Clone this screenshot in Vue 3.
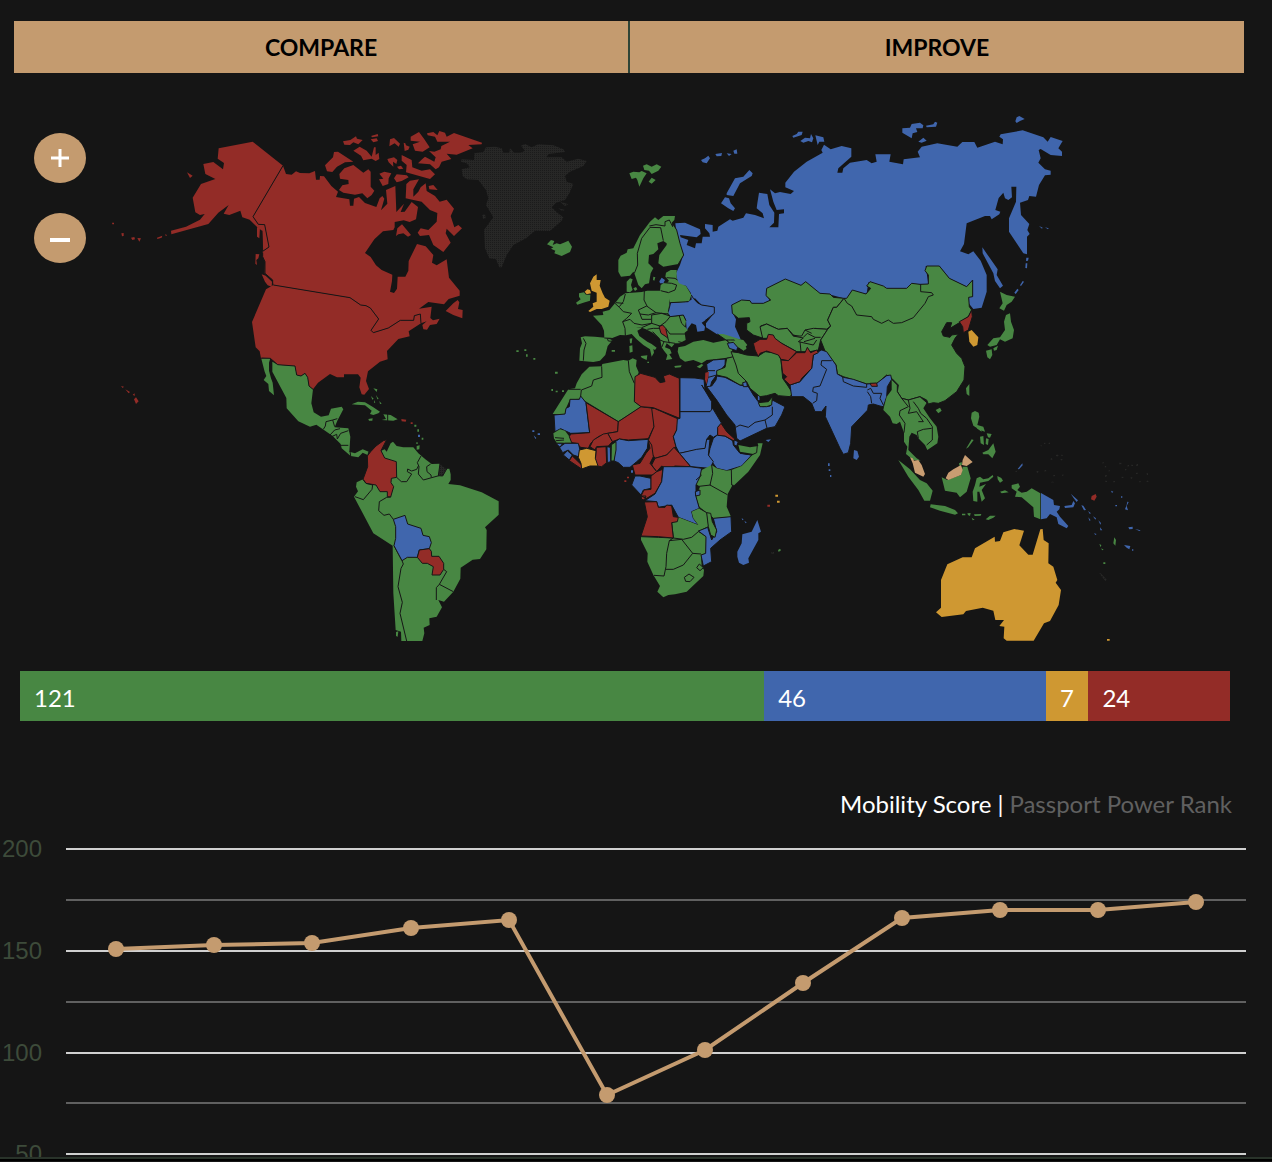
<script setup>
import { ref, computed } from 'vue'

const access = [
  { kind: 'free', count: 121, width: 61.5 },
  { kind: 'arrival', count: 46, width: 23.3 },
  { kind: 'eta', count: 7, width: 3.5 },
  { kind: 'required', count: 24, width: 11.7 }
]

// Each region has its own origin on the 3816 x 1593 map canvas.
// A shape is [class names, path data]; "lined" adds a country border.
const regions = [
  {
    name: 'Eurasia north',
    x: 1980,
    y: 0,
    shapes: [
      ['arrival', 'M46 340 75 338 120 358 122 372 110 382 60 375 62 382 85 390 80 405 105 415 108 400 125 400 128 380 150 380 148 370 135 355 135 342 158 345 158 365 172 362 175 350 210 328 218 332 250 323 258 310 285 315 312 325 308 310 290 295 292 280 297 248 322 252 328 285 343 308 342 338 328 352 355 352 357 312 372 310 372 298 350 300 340 275 330 238 345 250 360 246 392 252 402 243 376 232 376 218 402 185 440 155 488 128 484 120 492 104 512 118 545 108 574 115 574 140 535 175 532 188 547 188 550 175 570 158 620 150 635 160 650 155 646 133 692 133 688 155 729 163 731 148 780 142 773 125 785 110 832 100 892 110 907 96 943 96 952 113 1005 95 1028 103 1029 88 1018 80 1022 73 1088 61 1150 82 1163 95 1172 81 1208 93 1195 115 1206 125 1206 138 1172 135 1142 117 1136 120 1142 145 1135 158 1155 178 1172 182 1172 194 1155 196 1137 225 1128 260 1108 258 1104 270 1080 278 1083 315 1108 342 1102 360 1109 372 1101 380 1101 433 1090 430 1047 365 1047 325 1068 275 1069 230 1054 230 1056 262 1045 270 1035 265 1030 248 1016 264 1006 300 1021 305 1018 313 995 328 990 318 975 318 920 340 912 402 900 424 925 433 940 424 962 452 980 495 980 545 965 593 940 597 926 580 926 562 938 560 938 512 920 530 868 505 838 468 797 468 805 522 755 523 735 540 680 540 625 517 620 552 575 542 560 567 512 554 475 554 437 517 422 527 375 509 322 535 322 560 330 572 305 582 270 582 240 572 217 587 218 610 228 628 225 650 235 672 245 695 215 688 170 672 138 652 138 640 162 610 162 592 125 585 105 565 95 568 93 550 78 527 55 525 48 490 60 465 70 435 50 380Z'],
      ['arrival', 'M200 250 225 205 250 200 268 180 278 190 275 198 240 220 220 258 200 255ZM183 280 195 262 207 265 212 280 225 295 220 303 205 295ZM123 150 135 145 145 137 150 145 140 160 128 157ZM166 132 186 129 184 138 170 139ZM200 130 215 132 207 138ZM220 122 230 118 232 131 223 131Z'],
      ['arrival', 'M397 78 410 72 415 65 428 65 425 75 400 83ZM421 93 435 83 450 85 453 72 460 85 456 97 445 93 430 98ZM466 76 490 82 493 95 478 95 473 105ZM727 55 750 53 755 42 780 38 790 46 788 55 768 55 772 66 758 70 755 85 727 68ZM798 47 820 43 825 35 832 38 828 50 800 52ZM775 95 790 83 800 92 785 98ZM1066 34 1070 22 1078 18 1094 27 1080 33 1070 39Z'],
      ['arrival', 'M967 412 990 445 1013 478 1010 495 1029 527 1020 535 1005 513 1000 490 968 430ZM1099 443 1106 443 1104 452 1098 453ZM1097 460 1102 460 1101 475 1096 474ZM1088 513 1092 515 1083 528 1080 526ZM1063 548 1072 536 1076 540 1067 552ZM1137 348 1148 353 1146 356ZM1155 352 1166 355 1164 358Z']
    ]
  },
  {
    name: 'North America',
    x: 300,
    y: 0,
    shapes: [
      ['required', 'M458 95 549 167 459 320 475 343 494 344 507 411 488 424 486 362 472 352 449 329 427 322 421 302 388 315 371 311 386 285 355 308 325 342 214 373 213 362 258 350 300 329 314 312 300 315 286 307 278 263 303 222 346 207 316 192 310 162 340 156 369 178 372 159 353 146 356 115Z'],
      ['required', 'M549 167 558 192 575 194 588 184 600 189 628 190 645 183 648 209 659 209 660 198 672 199 694 228 714 245 708 261 748 268 750 287 760 287 762 266 777 261 795 279 829 291 839 265 847 258 853 266 843 301 862 281 858 240 886 228 889 306 912 281 902 306 914 305 935 276 954 291 948 328 929 336 911 331 884 336 884 352 880 360 849 364 823 388 795 429 812 441 828 466 845 480 877 494 876 513 870 545 882 549 891 536 893 500 916 500 925 482 926 453 951 402 977 409 1000 435 996 458 1010 466 1040 448 1047 503 1079 542 1079 557 1046 567 1032 583 985 576 957 596 995 590 991 624 999 631 1019 626 1010 642 990 645 981 659 970 658 967 645 980 634 963 640 961 612 943 617 941 631 901 631 865 654 820 668 813 661 836 627 811 594 798 587 782 585 750 563 520 525 518 510 494 490 495 455 488 440 488 424 507 411 494 344 475 343 459 320Z'],
      ['required', 'M702 126 714 125 760 155 735 157 711 170 697 186 681 184 675 166 699 142ZM718 192 733 175 760 165 790 188 805 178 812 185 812 230 823 242 815 255 802 265 787 250 765 254 730 248 717 240 727 226 746 222 745 210 720 206ZM760 122 779 110 800 122 815 140 822 112 827 112 827 135 836 128 838 147 827 153 815 146 790 151 783 137ZM729 94 751 90 768 79 771 86 788 90 775 103 760 97 750 105 733 104ZM813 78 833 72 835 79 817 82ZM812 88 830 85 834 93 820 97ZM870 88 882 84 900 101 896 110 884 100 868 109ZM911 98 916 100 918 106 929 110 925 119 914 123ZM862 147 882 142 892 150 889 162 879 155 880 170 866 157ZM891 170 903 167 910 176 897 178Z'],
      ['required', 'M905 135 935 150 937 172 965 182 990 178 1005 193 990 207 950 196 918 187 920 165 905 152ZM932 80 957 66 973 88 989 112 968 125 945 122 938 103 960 95 932 92ZM981 70 1000 66 1012 76 1018 63 1035 68 1040 80 1062 69 1146 98 1145 103 1105 105 1118 115 1070 134 1040 131 1054 147 1025 155 1017 172 1007 178 990 163 954 160 967 147 975 140 1003 155 1007 142 987 123 1003 125 1022 118 1024 108 1050 95 1012 95 1005 80 983 76ZM838 191 853 185 874 190 866 205 865 222 848 228 837 208 850 206ZM882 205 890 193 920 196 926 202 905 213 890 217Z'],
      ['required', 'M919 222 930 212 957 208 940 238 940 260 955 245 962 232 977 220 980 243 1005 258 1019 275 1040 269 1062 296 1052 318 1063 352 1075 345 1086 355 1062 378 1040 356 1037 370 1052 398 1030 426 1000 405 987 375 960 378 953 368 962 355 985 360 1010 335 1012 309 990 300 965 275 930 268 917 265ZM986 228 1000 225 1013 240 988 238ZM888 378 892 355 906 343 933 375 924 380 910 370 895 373ZM1037 603 1060 580 1073 570 1078 577 1074 597 1088 600 1087 625 1060 615Z'],
      ['required', 'M485 493 497 497 516 515 515 530 503 526 495 515ZM467 432 478 433 475 445 469 450 471 465 466 461ZM471 352 480 352 478 385 471 380ZM261 187 278 197 270 204ZM36 338 42 338 42 343 37 343ZM64 370 71 369 71 378 66 379ZM93 383 103 381 105 388 97 390ZM112 384 123 385 118 395ZM171 383 187 377 185 383 172 387ZM195 373 201 375 198 379Z'],
      ['required', 'M63 828 72 830 68 834ZM76 838 90 846 86 850ZM98 854 104 850 104 858ZM102 868 108 862 116 874 108 882Z'],
      ['border', 'M549 167 459 320 475 343 494 344 507 411 488 424 486 362M488 428 488 440 495 455 495 490 518 510 518 540']
    ]
  },
  {
    name: 'Central and South America',
    x: 720,
    y: 630,
    shapes: [
      ['required', 'M100-105 330-67 362-45 378-43 391-36 416-3 393 31 400 38 445 24 481 1 521 1 523-13 541-18 543 10 506 34 509 49 475 57 441 93 443 118 420 125 384 154 378 183 387 207 373 224 365 223 358 202 362 173 354 163 312 163 312 172 291 172 270 162 234 188 219 208 207 198 203 172 195 160 183 168 170 165 165 138 113 134 91 115 63 115 59 94 47 82 36 6 78-92Z'],
      ['border', 'M100-105 330-67 362-45 378-43 391-36 416-3 393 31 400 38 445 24 481 1 521 1 523-13 541-18 543 10'],
      ['free', 'M64 116 91 115 87 128 87 152 93 175 98 188 102 226 87 213 85 192 71 180 79 168 74 155ZM97 125 113 134 165 138 170 165 183 168 195 160 203 172 207 198 219 208 214 250 221 277 243 290 266 286 273 266 305 260 310 268 292 302 284 322 325 325 331 350 328 395 345 400 368 388 388 396 383 405 368 398 355 412 332 408 305 385 302 372 278 348 252 330 229 314 210 320 175 304 140 265 139 234 97 155Z'],
      ['border', 'M64 114 91 115 113 134 165 138 170 165 183 168 195 160 203 172 207 198 219 208M258 305 278 300 292 296M258 305 256 318 250 328M278 300 284 320M270 345 284 330 300 326M275 350 290 343 292 357 302 340 325 332M302 376 325 376M330 393 332 408M387 394 383 408'],
      ['free', 'M335 253 354 245 375 247 400 262 420 275 415 280 400 285 390 282 395 272 375 256 350 254ZM385 297 398 295 397 302 387 302ZM430 283 452 285 473 298 460 302 425 300 438 297ZM400 205 412 208 410 216ZM393 228 401 236 397 239ZM408 225 416 237 412 238ZM402 240 406 248 402 248ZM418 243 425 251 420 252ZM523 314h6v6h-6ZM532 328h5v7h-5ZM545 353h5v6h-5ZM529 367h4v5h-4ZM530 378 539 376 538 388 530 389Z'],
      ['border', 'M443 280V303'],
      ['required', 'M484 297 499 299 497 305 485 304ZM512 307h6v5h-6Z'],
      ['arrival', 'M534 344h6v7h-6ZM877 331h6v5h-6ZM881 346 889 354 886 357ZM893 340h7v5h-7Z'],
      ['free', 'M829 91h7v5h-7ZM853 88h6v5h-6ZM858 103h5v7h-5ZM880 114h6v5h-6Z'],
      ['free', 'M424 392 434 388 440 395 452 370 459 365 470 378 490 382 520 382 535 400 556 418 575 432 598 431 615 447 628 446 632 463 632 480 625 492 660 496 725 517 776 544 776 584 735 622 740 630 739 688 720 717 698 719 662 743 661 776 640 815 612 845 595 840 606 862 590 890 568 895 569 915 551 923 553 940 547 963 484 963 483 935 467 930 460 820 458 677 400 640 342 530 354 514 348 500 350 487 369 478 400 480 440 500Z'],
      ['free', 'M468 936 475 934 473 950 468 948Z'],
      ['required lined', 'M440 359 423 392 434 414 469 425 470 472 454 475 453 488 461 500 452 531 442 530 442 515 420 515 408 495 378 490 369 478 383 440 382 408 392 395 408 378 430 362Z'],
      ['border', 'M369 478 378 490 398 495 396 508 370 539 345 530M470 472 484 485 500 485 515 462 502 455 503 447 515 453 530 448 535 438M543 408 532 428 537 440 535 462 550 480 575 473 597 467M572 432 560 440 561 455 573 465 574 473M452 531 440 532 418 545 416 572 432 586 448 582 460 598M640 815 598 793 589 803 589 840M598 793 620 755 611 748M462 677 486 722 490 732 483 745 474 800 487 847 480 880 500 963'],
      ['none lined', 'M600 431 620 447 608 468 595 467Z'],
      ['arrival lined', 'M460 598 495 586 503 612 543 625 549 646 568 650 574 668 568 686 538 690 532 712 502 712 486 722 462 677 467 655 467 620Z'],
      ['required lined', 'M538 690 568 686 574 694 575 709 597 709 611 730 611 748 600 765 576 765 580 740 562 730 547 730 532 712Z']
    ]
  },
  {
    name: 'North Atlantic',
    x: 1350,
    y: 60,
    shapes: [
      ['none', 'M33 95 35 88 72 90 73 70 100 66 108 52 135 50 155 55 160 68 178 68 180 54 192 68 212 68 225 62 213 47 225 42 245 52 265 43 310 46 340 58 345 66 295 72 290 82 335 82 350 95 385 86 410 93 400 108 360 125 345 138 350 155 370 162 358 190 345 210 318 218 305 232 322 248 340 262 335 272 300 303 255 302 228 325 190 345 170 375 155 412 148 412 138 388 118 385 105 355 102 300 130 262 108 225 115 205 108 180 85 150 50 148 38 138 35 118 60 112 50 100ZM97 255 105 253 107 265 99 266ZM325 235 345 240 337 243ZM330 215 355 223 345 228Z'],
      ['free', 'M291 343 303 330 313 333 308 345 320 340 330 343 345 337 355 332 366 350 360 366 335 378 313 370 316 362 303 356 310 352ZM538 130 550 125 568 127 575 123 590 130 580 145 568 170 562 150 558 143 545 147ZM579 107 590 103 605 110 620 103 634 110 625 122 605 132 597 122 583 120ZM596 155 605 143 617 150 605 161Z'],
      ['eta', 'M430 440 440 433 440 450 452 450 449 467 458 490 465 503 479 512 475 530 455 537 440 537 420 546 415 543 430 530 428 520 440 515 440 488 425 482 420 460ZM404 485 412 478 420 480 423 490 410 493Z'],
      ['free', 'M387 490 402 487 408 494 421 494 420 512 400 518 382 524 378 518 392 508 387 500Z'],
      ['free', 'M513 440 505 425 505 390 512 377 530 368 533 358 550 355 570 315 600 275 615 262 625 270 640 258 675 258 673 270 665 278 680 300 690 340 701 375 685 402 640 410 625 400 628 375 650 345 650 340 640 333 622 340 625 358 610 372 597 375 595 400 610 415 602 430 597 460 585 463 575 475 565 465 553 430 550 425 540 437ZM530 455 540 445 548 448 543 465 548 480 540 487 530 485ZM550 475 558 471 562 478 555 483ZM610 440 616 442 613 452 609 450Z'],
      ['border', 'M553 430 563 405 562 370 575 325 600 292 632 293 640 332M598 288 618 284 645 288 645 275 658 270 668 290 668 280 680 300 690 340 701 375 685 402']
    ]
  },
  {
    name: 'Europe',
    x: 1680,
    y: 450,
    shapes: [
      ['free', 'M99 167 130 165 128 155 148 150 165 130 180 110 196 100 245 96 262 92 300 92 322 95 330 110 325 155 330 170 358 168 370 165 378 182 375 200 384 210 374 218 377 240 358 250 345 250 335 262 320 250 315 262 330 268 335 280 328 283 337 297 318 300 322 285 312 272 305 262 300 236 278 218 258 208 245 203 225 202 196 226 180 225 155 235 133 234 132 212 125 195Z'],
      ['free', 'M62 232 75 229 105 230 135 233 158 240 143 258 136 285 120 302 100 306 58 302 60 265 66 250ZM195 205 225 200 245 205 232 212 238 228 262 245 275 252 290 263 285 270 280 267 282 278 275 290 270 268 250 255 230 238 215 222 198 226ZM242 288 262 286 260 300 245 293ZM208 258 217 256 218 275 209 278ZM209 236 217 235 215 250 210 250ZM155 270h10v5h-10ZM343 318 365 316 362 322 345 323ZM410 320 425 312 430 315 420 325ZM262 305h5v4h-5Z'],
      ['free', 'M300 92 302 75 312 68 322 68 327 62 316 50 318 38 332 30 350 30 350 55 357 70 378 78 394 105 388 122 370 128 330 126 322 95Z'],
      ['arrival', 'M298 64 305 53 315 60 310 70 300 70ZM330 128 355 128 385 125 400 115 412 128 425 135 463 141 463 160 445 175 425 188 435 200 433 212 412 215 408 195 395 190 380 210 378 180 370 165 330 170 325 155Z'],
      ['free', 'M355 262 375 258 400 245 430 240 460 248 500 240 515 265 520 290 490 295 440 300 425 310 400 300 375 305 360 295 353 275ZM472 222 490 222 530 235 545 240 560 265 555 270 530 260 505 245Z'],
      ['border', 'M320 53 345 55 352 60M312 68 335 70 350 75 345 90 325 98 302 92M394 105 400 115 412 128 425 135 463 141 463 160 435 182M325 155 332 128 385 125M378 182 370 165 330 170 322 160M358 168 365 190 375 200'],
      ['border', 'M165 130 178 142 190 155M196 102 190 125 178 140M168 128 190 130M190 155 215 160 200 175 188 185 195 205 196 226M235 150 260 138 288 158 265 165 240 162 235 150M253 93 252 120 262 140M288 158 325 162M240 162 246 178 275 178 275 165M188 185 210 178 222 190 246 195 275 190 275 178M275 165 305 160 330 168M275 190 300 198 318 185 330 170M245 203 275 190M262 208 280 205 297 205M278 215 297 235M133 234 155 235 157 244 145 243 142 236M317 205 330 222 376 222M305 262 312 245 345 250M324 235 328 250M300 240 312 245M70 235 78 250 72 270 70 302M355 245 368 248'],
      ['required lined', 'M297 200 308 195 317 205 324 235 318 230 303 220Z'],
      ['border', 'M472 222 505 245 500 240 512 240 545 240'],
      ['arrival lined', 'M502 250 520 247 533 262 530 272 508 265Z']
    ]
  },
  {
    name: 'Africa and Arabia',
    x: 1620,
    y: 690,
    shapes: [
      ['free', 'M125 103 148 80 185 79 187 72 250 60 265 62 278 55 290 60 288 78 296 97 285 130 283 185 303 200 235 244 124 176 90 178 78 205 75 222 38 222 55 195 85 148 105 145 110 130Z'],
      ['border', 'M185 79 186 112 160 120 155 138 124 150 122 168M265 62 268 95 283 130M122 148 85 148'],
      ['arrival lined', 'M42 225 75 222 78 205 88 200 90 178 118 178 122 168 138 188 149 278 92 280 62 266 45 275Z'],
      ['free', 'M40 280 60 268 75 272 92 295 95 308 50 308 42 295Z'],
      ['border', 'M45 293 72 295M48 302 72 300'],
      ['required lined', 'M138 188 235 245 233 275 203 280 175 290 152 310 145 325 122 322 110 310 95 308 88 290 92 282 149 278Z'],
      ['required lined', 'M235 245 303 200 340 205 342 260 325 296 265 300 238 297 217 305 203 280 233 275Z'],
      ['required lined', 'M150 320 160 300 190 282 203 280 217 305 205 318 170 320 165 330Z'],
      ['required lined', 'M335 205 343 205 415 237 410 270 400 290 408 320 400 325 380 345 345 355 335 340 325 300 342 260Z'],
      ['required lined', 'M285 110 302 100 345 112 360 128 375 125 370 108 388 102 418 115 419 235 340 203 303 200 283 185Z'],
      ['arrival lined', 'M420 113 465 114 492 118 495 150 485 135 515 185 515 215 420 215Z'],
      ['arrival lined', 'M420 215 510 215 518 205 545 250 535 260 532 285 520 292 510 285 500 298 497 325 470 330 418 340 408 320 400 290 410 270 412 237 420 235Z'],
      ['arrival lined', 'M532 285 555 288 578 302 580 315 600 340 635 345 605 378 560 392 530 385 505 350 510 325 520 295Z'],
      ['required lined', 'M533 262 543 250 560 275 585 298 580 302 555 288 533 286Z'],
      ['free', 'M595 315 630 322 655 318 653 310 668 310 660 345 625 395 580 438 574 400 605 378 640 342 600 335Z'],
      ['border', 'M652 315 650 338 635 345 605 340'],
      ['arrival lined', 'M582 300 595 305 590 318 582 315Z'],
      ['arrival lined', 'M418 340 470 328 495 325 500 298 510 298 505 345 520 365 510 385 452 380Z'],
      ['required lined', 'M345 355 380 345 402 322 418 340 452 380 405 378 385 388 365 378 350 395 335 375Z'],
      ['required lined', 'M325 300 335 315 340 350 330 370 350 395 340 405 285 405 277 375 300 370 318 340 330 325Z'],
      ['arrival lined', 'M225 305 238 297 265 302 325 298 322 325 305 352 290 365 270 382 250 382 235 368 222 363Z'],
      ['free lined', 'M214 314 228 305 228 330 222 363 213 363Z'],
      ['arrival lined', 'M201 320 211 322 212 365 202 368Z'],
      ['required lined', 'M169 322 198 320 200 368 185 380 170 378 166 360Z'],
      ['arrival lined', 'M58 322 75 310 115 310 120 330 115 350 100 345 85 330 68 338ZM70 345 82 332 97 345 88 360ZM48 310 68 310 60 322Z'],
      ['required lined', 'M88 362 97 348 125 375 125 387Z'],
      ['eta lined', 'M118 330 140 325 168 332 166 355 174 378 150 378 125 387 123 370 115 352Z'],
      ['arrival lined', 'M285 408 300 408 333 415 333 445 310 450 303 465 275 435Z'],
      ['required lined', 'M333 408 350 395 368 388 365 425 345 460 320 475 303 468 312 450 333 448ZM303 468 318 468 313 480 305 478Z'],
      ['free', 'M485 390 515 375 530 385 560 392 574 390 605 378 576 438 563 462 560 500 573 530 520 535 478 500 468 470 480 440 465 430Z'],
      ['arrival lined', 'M370 380 400 380 450 380 485 385 480 410 468 435 468 470 478 505 455 515 460 535 475 555 415 532 395 495 355 502 350 485 315 482 345 462 365 425Z'],
      ['free', 'M395 548 415 532 475 555 460 535 455 515 478 505 500 518 505 560 475 575 498 590 497 640 483 645 485 678 492 690 490 708 440 755 405 763 385 765 370 772 352 755 360 738 340 705 322 665 323 640 303 600 303 588 400 594Z'],
      ['border', 'M515 375 518 400 510 435 562 464M468 440 512 435M468 420 485 405M574 390 575 435 582 438M478 505 500 518 520 535M395 548 400 594 430 598 455 592 475 575 505 560M388 602 380 640 378 680 372 708 342 706M303 590 355 592 400 594 388 602 425 598 458 640 430 675 400 688 378 688M458 640 483 642'],
      ['required lined', 'M313 486 350 485 355 502 375 502 380 495 395 497 400 530 415 532 412 545 395 548 400 594 355 590 303 588 322 530Z'],
      ['arrival lined', 'M466 455 480 450 480 465 467 468Z'],
      ['arrival lined', 'M520 535 573 530 575 575 540 600 512 625 515 665 490 678 483 645 497 640 498 590 475 573 503 562 515 600 530 575Z'],
      ['free lined', 'M500 518 512 520 517 545 530 570 525 592 512 585 505 560Z'],
      ['free lined', 'M433 712 447 702 462 712 450 725 437 724ZM470 683 478 672 490 683 480 692Z'],
      ['arrival', 'M652 540 663 575 655 580 655 600 625 655 627 668 610 675 597 668 592 650 592 635 605 610 607 583 635 575ZM605 535 611 538 607 541ZM613 543 620 547 617 550ZM273 391h6v7h-6ZM677 300 693 298 685 306Z'],
      ['eta', 'M706 464h8v6h-8ZM711 482h8v6h-8Z'],
      ['required', 'M682 494h8v6h-8ZM261 410h6v5h-6ZM253 421h6v5h-6Z'],
      ['free', 'M714 630 720 626 723 631 716 636ZM45 95h8v6h-8ZM34 147h5v6h-5ZM47 152h6v5h-6ZM66 151h6v5h-6Z'],
      ['none', 'M694 636h8v5h-8Z'],
      ['arrival lined', 'M500 72 520 60 556 57 555 75 530 105 515 125 510 145 498 140 504 112Z'],
      ['required', 'M496 98 507 95 504 115 499 133 495 118Z'],
      ['arrival lined', 'M500 140 515 138 528 120 530 108 555 112 600 135 625 140 640 165 655 185 668 200 690 198 697 180 735 200 725 225 705 260 680 265 600 303 590 295 585 255 560 225 530 180Z'],
      ['border', 'M587 262 600 255 625 262 645 247 675 240 697 225 697 200M675 240 682 268M503 92 525 92M505 112 530 105'],
      ['free lined', 'M530 105 530 92 555 82 560 55 580 50 600 70 595 90 615 115 620 135 600 135 560 112Z'],
      ['free lined', 'M655 188 685 185 697 170 695 195 680 200 660 200Z'],
      ['arrival lined', 'M608 128 620 125 622 140 610 140ZM652 166 660 166 660 182 652 182Z']
    ]
  },
  {
    name: 'Asia',
    x: 2100,
    y: 420,
    shapes: [
      ['free lined', 'M95 165 125 150 150 152 155 160 190 160 212 150 198 137 200 115 256 87 303 106 317 95 360 130 390 132 400 142 432 145 410 172 400 172 383 210 392 228 380 238 345 235 310 262 300 260 280 255 262 235 235 238 200 222 182 228 190 265 160 255 140 240 140 220 150 215 148 203 115 205 97 190Z'],
      ['free lined', 'M180 230 200 222 235 238 262 235 280 258 305 258 315 240 340 235 383 238 362 270 355 300 330 305 290 305 245 280 215 265 188 265Z'],
      ['border', 'M280 258 310 264 295 275 340 285 350 270M300 275 303 305M310 262 322 250 345 262 362 262M312 275 345 265M315 240 335 250'],
      ['free lined', 'M93 305 115 308 140 315 175 318 195 305 235 310 243 330 248 385 262 405 278 430 270 440 235 437 225 430 200 437 180 440 150 415 140 395 115 370 108 345Z'],
      ['free', 'M100 265 130 270 142 285 135 292 132 303 120 295 115 285Z'],
      ['required lined', 'M160 280 180 268 200 268 205 253 220 255 225 265 245 280 290 305 265 332 243 328 235 315 200 303 180 310 175 320 165 300Z'],
      ['free lined', 'M432 145 440 145 457 120 498 132 512 115 500 108 510 95 550 108 560 115 620 115 635 100 660 103 685 102 685 75 675 62 680 48 718 48 748 85 800 110 818 90 818 140 806 142 808 170 815 180 805 200 790 210 775 220 750 235 755 218 740 218 725 245 730 258 750 262 755 255 775 252 765 265 755 285 770 310 785 325 795 350 792 390 770 425 735 452 715 460 700 458 685 462 680 450 660 440 625 450 605 445 592 425 595 405 575 385 560 375 530 402 500 402 430 380 412 372 408 345 375 303 362 270 383 238 392 228 383 210 400 172 410 172Z'],
      ['border', 'M432 145 442 160 455 168 470 195 515 200 520 208 545 220 565 210 580 220 605 218 640 203 675 160 685 140 700 135 695 128 662 125 662 103'],
      ['arrival lined', 'M270 405 300 395 335 355 340 315 355 305 365 300 380 305 408 345 412 372 430 382 460 388 500 402 530 400 560 377 572 375 575 388 562 410 560 440 550 470 540 468 520 462 505 465 503 480 455 530 452 580 445 608 430 613 420 595 376 500 378 468 365 485 345 485 335 460 310 440 275 440Z'],
      ['required lined', 'M243 330 265 332 290 308 315 308 322 292 332 308 350 300 355 308 340 315 335 355 305 385 300 395 270 405 252 388 260 380 248 370Z'],
      ['border', 'M395 332 365 332 363 345 380 358 360 408 340 412 338 425 352 430 350 452 338 460M428 380 430 395 460 408 500 412 500 402M502 420 512 415 520 430 545 430 540 445 550 465M515 460 512 440 502 425'],
      ['required lined', 'M510 400 530 399 532 409 515 409Z'],
      ['arrival', 'M462 600 472 603 477 620 470 630 460 625ZM384 640h5v8h-5ZM386 658h5v5h-5ZM390 675h4v6h-4Z'],
      ['free', 'M707 480 720 473 725 482 715 490ZM798 415 808 402 808 438 800 432ZM815 488 825 483 836 488 838 500 832 525 850 530 855 545 840 540 820 527 813 505ZM900 125 920 135 945 140 935 155 920 165 912 182 898 175 908 160ZM918 195 930 190 933 215 942 240 938 265 915 275 900 268 890 285 870 290 862 285 880 265 900 262 915 240 912 215ZM858 302 875 298 877 315 870 328 862 322ZM880 295 894 287 890 300 882 302Z'],
      ['required lined', 'M815 180 817 200 805 240 790 248 788 230 778 215 805 200Z'],
      ['eta', 'M805 245 815 240 835 262 832 285 820 290 808 275Z'],
      ['free', 'M575 388 592 405 592 425 605 445 625 450 660 440 680 458 670 475 690 505 710 530 715 560 712 580 682 600 675 585 655 565 650 555 635 548 628 560 625 600 650 625 662 632 640 630 618 612 622 590 612 575 612 548 600 515 590 522 578 520 570 500 550 480 552 470 560 440 575 420Z'],
      ['border', 'M605 445 625 470 600 482 598 495 615 520 612 548M625 450 630 475 625 490 650 485 670 515 655 515M640 455 655 475 662 490 680 505 697 530 697 570 680 585M655 565 652 545 670 538 695 535M575 388 592 405 592 425 605 445 625 450 660 440 685 462']
    ]
  },
  {
    name: 'Oceania',
    x: 2580,
    y: 930,
    shapes: [
      ['home', 'M150 112 158 115 162 122 175 120 185 135 195 162 190 170 165 158 158 130Z'],
      ['free', 'M115 120 150 148 180 180 200 190 218 212 210 242 193 242 175 210 145 170ZM212 253 255 258 285 270 294 280 285 284 240 272 210 262ZM306 281h10v5h-10ZM322 280 332 279 330 288 324 285ZM342 283 364 282 362 287 344 288ZM335 293 344 299 338 301ZM377 298 390 287 407 287 400 293 385 300ZM245 172 262 180 303 165 308 140 322 140 332 175 320 215 300 232 290 218 255 212ZM297 130 305 126 306 134 298 137Z'],
      ['home', 'M257 175 265 158 280 148 303 135 308 150 303 165 265 180ZM315 105 338 126 320 138 306 135 308 120Z'],
      ['free', 'M350 175 360 170 370 178 385 175 398 165 400 170 385 183 360 188 358 200 378 192 365 210 375 235 365 245 358 215 352 215 352 245 340 243 338 215 345 195ZM412 168 424 174 429 182 420 188 413 178ZM420 215 435 211 446 217 425 220ZM318 86 335 58 341 60 325 82ZM360 50 370 48 372 75 362 70ZM380 40 395 42 390 53 384 52ZM378 55 386 57 384 75 377 72ZM350 25 362 20 365 35ZM367 98 385 90 400 70 407 95 397 115 385 103 370 103Z'],
      ['free', 'M455 195 475 190 480 200 472 210 485 218 500 215 515 205 541 220 541 298 522 290 520 262 485 232 465 230 470 215 455 205ZM763 352 768 360 766 377 760 370ZM718 372 724 375 722 382ZM724 385 731 389 726 391ZM730 427h6v5h-6Z'],
      ['arrival', 'M543 219 580 240 582 255 600 258 598 268 590 275 600 290 625 318 620 325 595 312 590 292 570 282 560 295 543 298ZM613 258 635 255 640 243 645 250 640 262 615 264ZM632 221 654 241 650 246 643 237ZM664 256 670 257 678 270 672 271ZM684 273 692 279 690 283ZM685 292 692 301 688 302ZM699 289 708 295 706 299ZM715 301 723 309 721 314ZM720 322 727 331 721 331ZM702 340 710 342 706 345Z'],
      ['arrival', 'M473 147 487 130 488 136 477 148ZM753 212 760 215 756 219ZM766 255h5v4h-5ZM783 229h4v4h-4ZM795 268 800 255 802 245 806 246 800 258 804 271ZM805 322 818 320 818 327 808 328ZM825 327 842 331 838 333ZM792 375 811 378 808 388 800 383ZM816 388h4v4h-4Z'],
      ['required', 'M695 228 707 222 710 230 703 242 693 238Z'],
      ['none', 'M718 460 722 460 740 479 736 483ZM465 156 472 150 470 156ZM552 68h4v4h-4ZM566 68h4v4h-4ZM542 76h3v3h-3ZM588 104h7v5h-7ZM604 104h4v4h-4ZM572 115h5v4h-5ZM602 117h5v4h-5ZM530 153h5v5h-5ZM552 150h7v4h-7ZM580 165h5v4h-5ZM606 163h4v4h-4ZM575 185h5v4h-5ZM726 126h5v4h-5ZM734 138h5v4h-5ZM745 150h4v4h-4ZM735 166h6v4h-6ZM736 182h5v4h-5ZM760 183h5v4h-5ZM778 128h6v5h-6ZM795 147h4v4h-4ZM803 135h4v5h-4ZM814 134h5v4h-5ZM828 132h6v5h-6ZM785 170h5v4h-5ZM812 172h5v4h-5ZM828 158h5v4h-5ZM838 183h4v4h-4ZM860 160h4v5h-4ZM860 182h5v4h-5Z'],
      ['eta', 'M430 337 463 327 492 332 478 376 505 404 518 404 541 328 548 327 551 360 566 370 565 430 580 440 592 480 587 488 603 510 596 555 570 603 552 610 521 662 440 662 431 655 433 620 418 618 432 600 406 600 400 572 368 563 318 573 310 583 245 591 228 577 243 563 243 480 262 433 308 412 335 412 345 385 404 350 405 365 420 363ZM741 657h8v5h-8Z']
    ]
  }
]

const zoomLevel = ref(1)
const zoom = (step) => {
  zoomLevel.value = Math.min(4, Math.max(1, zoomLevel.value + step))
}

const viewBox = computed(() => {
  const w = 3816 / zoomLevel.value
  const h = 1593 / zoomLevel.value
  return `${(3816 - w) / 2} ${(1593 - h) / 2} ${w} ${h}`
})

// chart
const metric = ref('score')
const scores = [151, 153, 154, 161, 165, 79, 101, 134, 166, 170, 170, 174]
const ticks = [200, 175, 150, 125, 100, 75, 50]

const valueToY = (value) => Math.round(12 + (200 - value) * 2.035)
const points = scores.map((score, i) => ({
  x: Math.round(116 + i * 98.2),
  y: valueToY(score)
}))
const linePoints = points.map((p) => `${p.x},${p.y}`).join(' ')
</script>

<template>
  <div class="page">
    <nav class="actions">
      <button type="button">COMPARE</button>
      <button type="button">IMPROVE</button>
    </nav>

    <section class="map">
      <div class="zoom-controls">
        <button type="button" aria-label="Zoom in" @click="zoom(1)">
          <svg width="20" height="20" viewBox="0 0 20 20">
            <path d="M10 1v18M1 10h18" />
          </svg>
        </button>
        <button type="button" aria-label="Zoom out" @click="zoom(-1)">
          <svg width="20" height="20" viewBox="0 0 20 20">
            <path class="thick" d="M0 12h20" />
          </svg>
        </button>
      </div>

      <svg class="world" :viewBox="viewBox" role="img" aria-label="World map of visa requirements">
        <defs>
          <pattern id="dots" width="6" height="6" patternUnits="userSpaceOnUse">
            <rect width="6" height="6" fill="#272726" />
            <rect width="3" height="3" fill="#1b1b1b" />
          </pattern>
        </defs>
        <g v-for="region in regions" :key="region.name" :transform="`translate(${region.x} ${region.y})`">
          <path v-for="(shape, i) in region.shapes" :key="i" :class="shape[0]" :d="shape[1]" />
        </g>
      </svg>
    </section>

    <div class="access-bar">
      <div
        v-for="item in access"
        :key="item.kind"
        class="segment"
        :class="item.kind"
        :style="{ width: item.width + '%' }"
      >
        {{ item.count }}
      </div>
    </div>

    <section class="history">
      <div class="metric-tabs">
        <button type="button" :class="{ active: metric === 'score' }" @click="metric = 'score'">Mobility Score</button>
        <span>|</span>
        <button type="button" :class="{ active: metric === 'rank' }" @click="metric = 'rank'">Passport Power Rank</button>
      </div>

      <svg class="chart" viewBox="0 0 1272 320" role="img" aria-label="Mobility score by year">
        <g v-for="tick in ticks" :key="tick">
          <line :class="{ minor: tick % 50 }" x1="66" x2="1246" :y1="valueToY(tick)" :y2="valueToY(tick)" />
          <text v-if="tick % 50 === 0" x="42" :y="valueToY(tick) + 8">{{ tick }}</text>
        </g>
        <polyline :points="linePoints" />
        <circle v-for="(p, i) in points" :key="i" :cx="p.x" :cy="p.y" r="8" />
      </svg>
    </section>
  </div>
</template>

<style>
body {
  margin: 0;
  background: #151515;
}
</style>

<style scoped>
.page {
  padding-top: 21px;
  background: #151515;
  color: #fff;
  font-family: Lato, 'Open Sans', sans-serif;
  font-size: 24px;
  border-bottom: 2px solid #000;
  overflow: hidden;
}

button {
  border: none;
  padding: 0;
  font: inherit;
  cursor: pointer;
}

.actions {
  display: flex;
  margin: 0 28px 0 14px;
}

.actions button {
  flex: 1;
  height: 52px;
  background: #c49b6f;
  color: #000;
  font-size: 23px;
  font-weight: bold;
}

.actions button + button {
  border-left: 2px solid #2f4436;
}

/* --- map --- */
.map {
  position: relative;
  margin-top: 37px;
}

.world {
  display: block;
  width: 100%;
}

.zoom-controls {
  position: absolute;
  top: 23px;
  left: 34px;
  display: flex;
  flex-direction: column;
  gap: 30px;
}

.zoom-controls button {
  display: flex;
  align-items: center;
  justify-content: center;
  width: 52px;
  height: 50px;
  border-radius: 50%;
  background: #c49b6f;
}

.zoom-controls path {
  stroke: #fff;
  stroke-width: 3;
}

.zoom-controls .thick {
  stroke-width: 4;
}

.world .free { fill: #488743; }
.world .arrival { fill: #4066ad; }
.world .eta { fill: #cf9832; }
.world .required { fill: #932c27; }
.world .home { fill: #c99d72; }
.world .none { fill: url(#dots); }

.world .lined,
.world .border {
  stroke: #161616;
  stroke-width: 3;
  stroke-linejoin: round;
}

.world .border {
  fill: none;
}

/* --- totals --- */
.access-bar {
  display: flex;
  margin: 30px 42px 0 20px;
}

.segment {
  box-sizing: border-box;
  height: 50px;
  padding-left: 14px;
  line-height: 54px;
}

.segment.free { background: #488743; }
.segment.arrival { background: #4066ad; }
.segment.eta { background: #cf9832; }
.segment.required { background: #932c27; }

/* --- chart --- */
.history {
  margin-top: 66px;
  border-bottom: 2px solid #29332a;
}

.metric-tabs {
  display: flex;
  justify-content: flex-end;
  gap: 6px;
  height: 34px;
  margin-right: 40px;
  line-height: 34px;
}

.metric-tabs button {
  background: none;
  color: #606060;
}

.metric-tabs button.active {
  color: #fff;
}

.chart {
  display: block;
  width: 100%;
  margin-top: 16px;
}

.chart line {
  stroke: #d0d0d0;
  stroke-width: 2;
}

.chart line.minor {
  stroke: #606060;
}

.chart text {
  fill: #3d4b3a;
  font-family: 'Liberation Sans', Arial, sans-serif;
  font-size: 24px;
  text-anchor: end;
}

.chart polyline {
  fill: none;
  stroke: #c49b6f;
  stroke-width: 4;
}

.chart circle {
  fill: #c49b6f;
}
</style>
